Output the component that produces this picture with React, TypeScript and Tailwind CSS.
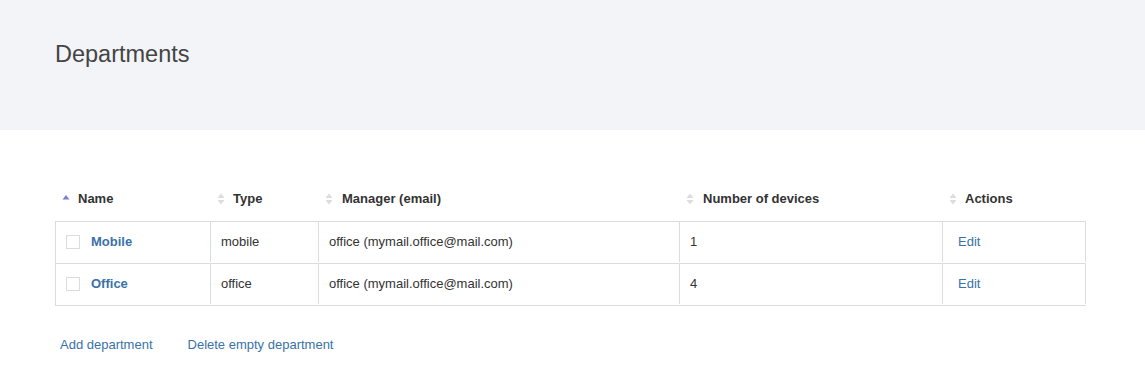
const rows = [
  { name: 'Mobile', type: 'mobile', manager: 'office (mymail.office@mail.com)', devices: 1 },
  { name: 'Office', type: 'office', manager: 'office (mymail.office@mail.com)', devices: 4 },
]

function SortIcon({ active }: { active?: boolean }) {
  if (active) {
    return (
      <svg width="8" height="10" viewBox="0 0 8 10" className="shrink-0">
        <path d="M4 1 L7.5 5.5 L0.5 5.5 Z" fill="#7a7fd6" />
      </svg>
    )
  }
  return (
    <svg width="8" height="12" viewBox="0 0 8 12" className="shrink-0">
      <path d="M4 0.5 L7.5 5 L0.5 5 Z" fill="#dcdcdc" />
      <path d="M4 11.5 L7.5 7 L0.5 7 Z" fill="#dcdcdc" />
    </svg>
  )
}

const columns = [
  { label: 'Name', width: 'w-[155px]', gap: 'gap-[8px]', active: true },
  { label: 'Type', width: 'w-[108px]', gap: 'gap-[8px]' },
  { label: 'Manager (email)', width: 'w-[361px]', gap: 'gap-[9px]' },
  { label: 'Number of devices', width: 'w-[263px]', gap: 'gap-[9px]' },
  { label: 'Actions', width: 'w-[143px]', gap: 'gap-[8px]' },
]

export default function App() {
  return (
    <div className="min-h-[391px] bg-white font-['Liberation_Sans',Arial,sans-serif] text-[#333]">
      <div className="h-[130px] bg-[#f3f4f8] px-[55px] pt-[40px]">
        <h1 className="text-[23.5px] leading-[28px] text-[#444]">Departments</h1>
      </div>

      <div className="px-[55px] pt-[59px]">
        <div className="flex h-[32px] items-start">
          {columns.map((c) => (
            <div
              key={c.label}
              className={`${c.width} ${c.gap} flex items-center pl-[7px] text-[13px] font-bold leading-[20px] text-[#333]`}
            >
              <SortIcon active={c.active} />
              <span>{c.label}</span>
            </div>
          ))}
        </div>

        <div className="w-[1031px] border-t border-l border-[#dcdcdc] text-[13px]">
          {rows.map((r) => (
            <div key={r.name} className="flex h-[42px] border-b border-[#dcdcdc] pb-[1px]">
              <div className="flex w-[155px] items-center gap-[11px] border-r border-[#dcdcdc] pl-[10px]">
                <span className="h-[14px] w-[14px] border border-[#dcdcdc] bg-white" />
                <a className="font-bold text-[#3a72a8]">{r.name}</a>
              </div>
              <div className="flex w-[108px] items-center border-r border-[#dcdcdc] pl-[10px]">
                {r.type}
              </div>
              <div className="flex w-[361px] items-center border-r border-[#dcdcdc] pl-[10px]">
                {r.manager}
              </div>
              <div className="flex w-[263px] items-center border-r border-[#dcdcdc] pl-[10px]">
                {r.devices}
              </div>
              <div className="flex w-[143px] items-center border-r border-[#dcdcdc] pl-[15px]">
                <a className="text-[#3a72a8]">Edit</a>
              </div>
            </div>
          ))}
        </div>

        <div className="flex gap-[35px] pl-[5px] pt-[29px] text-[13px] text-[#3a72a8]">
          <a>Add department</a>
          <a>Delete empty department</a>
        </div>
      </div>
    </div>
  )
}
